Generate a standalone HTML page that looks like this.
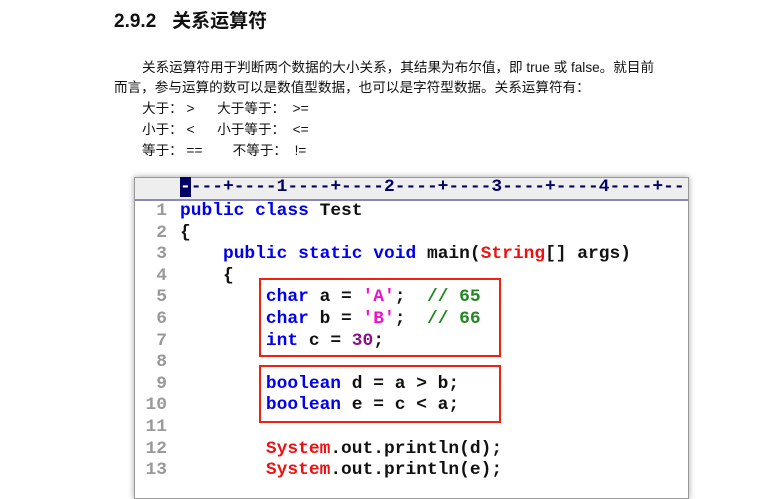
<!DOCTYPE html>
<html><head><meta charset="utf-8"><style>
body{margin:0;width:780px;height:484px;background:#fff;overflow:hidden;position:relative;font-family:"Liberation Sans","Noto Sans CJK SC",sans-serif;}
.t{position:absolute;white-space:pre;color:#111;font-size:13.6px;line-height:16px}
h1{position:absolute;left:114px;top:6px;margin:0;font-size:19px;font-weight:bold;color:#111}
#panel{position:absolute;left:134px;top:177px;width:553px;height:320px;background:#fff;border:1px solid #999;box-shadow:0 0 6px rgba(0,0,0,.35)}
#ruler{position:absolute;left:0;top:0;width:553px;height:21px;background:#eee;border-bottom:2px solid #8888bb}
.m{font-family:"Liberation Mono",monospace;font-weight:bold;font-size:17.9px;white-space:pre;position:absolute;line-height:21.6px}
.n{color:#999;text-align:right;width:32px;left:0}
.k{color:#0000ee}.s{color:#ee1111}.p{color:#ee11cc}.c{color:#228822}.v{color:#881188}
.box{position:absolute;border:2px solid #e21;}
</style></head><body>
<h1>2.9.2&nbsp;&nbsp; 关系运算符</h1>
<div class="t" style="left:142px;top:60px">关系运算符用于判断两个数据的大小关系，其结果为布尔值，即 true 或 false。就目前</div>
<div class="t" style="left:114px;top:80px">而言，参与运算的数可以是数值型数据，也可以是字符型数据。关系运算符有：</div>
<div class="t" style="left:142px;top:101px">大于： &gt;      大于等于：  &gt;=</div>
<div class="t" style="left:142px;top:122px">小于： &lt;      小于等于：  &lt;=</div>
<div class="t" style="left:142px;top:143px">等于： ==        不等于：  !=</div>
<div id="panel">
<div id="ruler"><div class="m" style="left:45px;top:-1px;color:#000066"><span style="background:#000066;color:#fff">-</span>---+----1----+----2----+----3----+----4----+--</div></div>
<div class="m n" style="top:23px">1<br>2<br>3<br>4<br>5<br>6<br>7<br>8<br>9<br>10<br>11<br>12<br>13</div>
<div class="m" style="left:45px;top:23px;color:#111"><span class="k">public class</span> Test
{
    <span class="k">public static void</span> main(<span class="s">String</span>[] args)
    {
        <span class="k">char</span> a = <span class="p">'A'</span>;  <span class="c">// 65</span>
        <span class="k">char</span> b = <span class="p">'B'</span>;  <span class="c">// 66</span>
        <span class="k">int</span> c = <span class="v">30</span>;

        <span class="k">boolean</span> d = a &gt; b;
        <span class="k">boolean</span> e = c &lt; a;

        <span class="s">System</span>.out.println(d);
        <span class="s">System</span>.out.println(e);</div>
<div class="box" style="left:124px;top:100px;width:238px;height:75px"></div>
<div class="box" style="left:124px;top:187px;width:238px;height:54px"></div>
</div>
</body></html>
